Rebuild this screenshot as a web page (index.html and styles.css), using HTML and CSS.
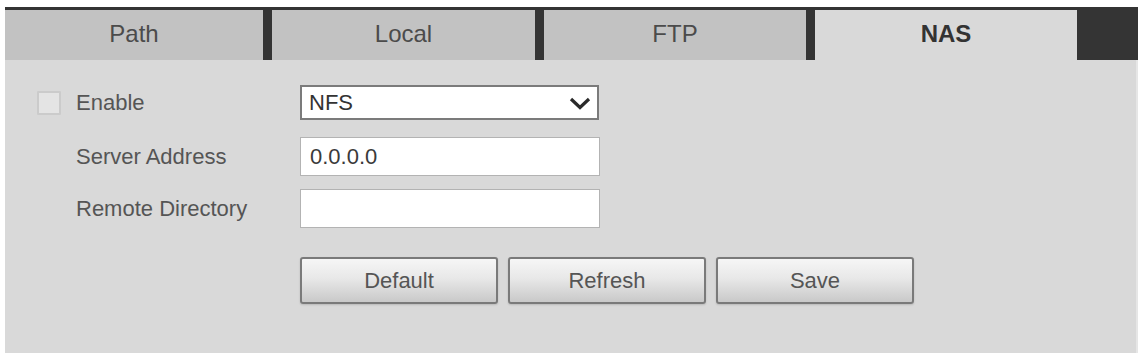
FILE: index.html
```html
<!DOCTYPE html>
<html>
<head>
<meta charset="utf-8">
<link rel="stylesheet" href="styles.css">
</head>
<body>
<div class="panel">
  <div class="tabs">
    <div class="tab tab-path">Path</div>
    <div class="tab tab-local">Local</div>
    <div class="tab tab-ftp">FTP</div>
    <div class="tab tab-nas active">NAS</div>
  </div>
  <div class="content">
    <div class="form">
      <div class="row row-enable">
        <span class="checkbox"></span>
        <span class="label">Enable</span>
        <div class="select">
          <span class="select-text">NFS</span>
          <svg class="chevron" width="22" height="13" viewBox="0 0 22 13"><path d="M2 2 L11 10.5 L20 2" fill="none" stroke="#2a2a2a" stroke-width="3.2" stroke-linejoin="miter"/></svg>
        </div>
      </div>
      <div class="row row-server">
        <span class="spacer"></span>
        <span class="label">Server Address</span>
        <div class="input">0.0.0.0</div>
      </div>
      <div class="row row-remote">
        <span class="spacer"></span>
        <span class="label">Remote Directory</span>
        <div class="input"></div>
      </div>
      <div class="buttons">
        <button class="btn">Default</button>
        <button class="btn">Refresh</button>
        <button class="btn">Save</button>
      </div>
    </div>
  </div>
</div>
</body>
</html>
```

FILE: styles.css
```css
* { box-sizing: border-box; }
html, body {
  margin: 0;
  padding: 0;
  background: #ffffff;
  font-family: "Liberation Sans", Arial, sans-serif;
}
body { width: 1140px; height: 353px; overflow: hidden; }

.panel {
  margin-left: 5px;
  margin-top: 7px;
  width: 1133px;
}

.tabs {
  display: flex;
  gap: 9px;
  background: #343434;
  padding-top: 3px;
  height: 53px;
}
.tab {
  height: 50px;
  background: #c2c2c2;
  display: flex;
  align-items: center;
  justify-content: center;
  font-size: 24px;
  color: #4b4b4b;
  padding-bottom: 3px;
}
.tab-path { width: 258px; }
.tab-local { width: 263px; }
.tab-ftp { width: 262px; }
.tab-nas { width: 262px; }
.tab.active {
  background: #d9d9d9;
  font-weight: bold;
  color: #333333;
}

.content {
  background: #d9d9d9;
  height: 293px;
  border-right: 2px solid #e6e6e6;
  padding: 25px 0 0 32px;
}

.row {
  display: flex;
  align-items: center;
}
.row-enable { height: 35px; }
.row-server { height: 39px; margin-top: 17px; }
.row-remote { height: 39px; margin-top: 13px; }

.checkbox, .spacer {
  width: 39px;
  flex: none;
}
.checkbox {
  height: 24px;
  width: 24px;
  margin-right: 15px;
  background: #e4e4e4;
  border: 2px solid #cbcbcb;
  border-radius: 1px;
}
.label {
  width: 224px;
  flex: none;
  font-size: 22px;
  color: #555555;
}

.select {
  width: 299px;
  height: 35px;
  background: #ffffff;
  border: 2px solid #7b7b7b;
  display: flex;
  align-items: center;
  justify-content: space-between;
  padding: 0 6px 0 7px;
}
.select-text {
  font-size: 22px;
  color: #333333;
}
.chevron { display: block; margin-top: 1px; }

.input {
  width: 300px;
  height: 39px;
  background: #ffffff;
  border: 1px solid #b3b3b3;
  font-size: 22px;
  color: #3a3a3a;
  padding-left: 9px;
  display: flex;
  align-items: center;
}

.buttons {
  display: flex;
  gap: 10px;
  margin-top: 29px;
  margin-left: 263px;
}
.btn {
  width: 198px;
  height: 47px;
  border: 2px solid #7a7a7a;
  border-radius: 3px;
  background: linear-gradient(#f6f6f6 0%, #e8e8e8 45%, #c9c9c9 100%);
  box-shadow: 0 1px 2px rgba(0,0,0,0.15);
  font-family: "Liberation Sans", Arial, sans-serif;
  font-size: 22px;
  color: #555555;
  padding: 0;
}
```
